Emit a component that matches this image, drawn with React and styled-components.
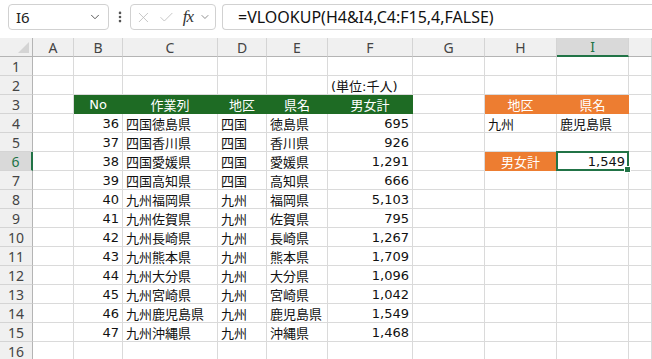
import React from 'react';
import styled, { createGlobalStyle, css } from 'styled-components';
import { ChevronDown, X, Check, EllipsisVertical } from 'lucide-react';

const GREEN = '#1e6b24';
const ORANGE = '#ed7d31';
const SEL = '#217346';
const GRID = '#dadada';

const Global = createGlobalStyle`
  html, body { margin: 0; padding: 0; background: #fff; overflow: hidden; }
  body { font-family: "DejaVu Sans", "Noto Sans CJK JP", sans-serif; }
`;

const Page = styled.div`
  width: 652px;
  height: 359px;
  overflow: hidden;
`;

// ===== formula bar
const FormulaBar = styled.div`
  height: 38px;
  display: flex;
  align-items: flex-start;
  padding: 4px 0 0 8px;
  box-sizing: border-box;
  gap: 0;
`;

const Box = styled.div`
  height: 26px;
  box-sizing: border-box;
  border: 1px solid #d1d1d1;
  border-radius: 4px;
  background: #fff;
  display: flex;
  align-items: center;
  font-family: "Noto Sans", sans-serif;
  color: #222;
`;

const NameBox = styled(Box)`
  width: 101px;
  padding: 0 6px 0 7px;
  justify-content: space-between;
  font-size: 15px;
`;

const Dots = styled.div`
  width: 21px;
  display: flex;
  justify-content: center;
  padding-top: 6px;
  color: #555;
`;

const FnBox = styled(Box)`
  width: 86px;
  padding: 0 4px 0 4px;
  gap: 6px;
  color: #bdbdbd;
`;

const Fx = styled.span`
  font-family: "Liberation Serif", serif;
  font-style: italic;
  font-size: 17px;
  color: #333;
  margin-left: 2px;
  letter-spacing: -1px;
`;

const FormulaBox = styled(Box)`
  flex: 1;
  margin-left: 6px;
  border-right: none;
  border-radius: 4px 0 0 4px;
  padding-left: 15px;
  font-size: 16px;
  color: #111;
`;

// ===== sheet grid
const Sheet = styled.div`
  display: grid;
  grid-template-columns: 33px 41px 49px 95px 49px 61px 85px 72px 72px 72px 1fr;
  grid-template-rows: repeat(17, 19px);
`;

const Corner = styled.div`
  background: #f0f0f0;
  border-right: 1px solid #b4b4b4;
  border-bottom: 1px solid #b4b4b4;
  display: flex;
  align-items: flex-end;
  justify-content: flex-end;
  padding: 0 3px 3px 0;
  box-sizing: border-box;
`;

const Tri = styled.div`
  width: 0;
  height: 0;
  border-left: 11px solid transparent;
  border-bottom: 11px solid #d4d4d4;
`;

const ColHead = styled.div`
  background: ${p => (p.$active ? '#d9d9d9' : '#f0f0f0')};
  border-right: 1px solid #d4d4d4;
  border-bottom: ${p => (p.$active ? `2px solid ${SEL}` : '1px solid #b4b4b4')};
  box-sizing: border-box;
  display: flex;
  align-items: center;
  justify-content: center;
  font-family: "Noto Sans", sans-serif;
  font-size: 14px;
  color: ${p => (p.$active ? SEL : '#444')};
`;

const RowHead = styled.div`
  background: ${p => (p.$active ? '#d9d9d9' : '#f0f0f0')};
  border-right: ${p => (p.$active ? `2px solid ${SEL}` : '1px solid #b4b4b4')};
  border-bottom: 1px solid #d4d4d4;
  box-sizing: border-box;
  display: flex;
  align-items: center;
  justify-content: center;
  font-family: "Noto Sans", sans-serif;
  font-size: 14px;
  color: ${p => (p.$active ? SEL : '#444')};
`;

const Cell = styled.div`
  position: relative;
  box-sizing: border-box;
  border-right: 1px solid ${p => p.$fill || GRID};
  border-bottom: 1px solid ${p => p.$fill || GRID};
  background: ${p => p.$fill || '#fff'};
  color: ${p => p.$fg || '#111'};
  display: flex;
  align-items: center;
  justify-content: ${p =>
    p.$align === 'right' ? 'flex-end' : p.$align === 'center' ? 'center' : 'flex-start'};
  padding: 1px 3px 0 3px;
  font-size: 13px;
  white-space: nowrap;
  overflow: visible;
  z-index: ${p => (p.$selected ? 2 : 0)};
  ${p =>
    p.$selected &&
    css`
      &::after {
        content: '';
        position: absolute;
        left: -1px;
        top: -1px;
        right: -1px;
        bottom: -1px;
        border: 2px solid ${SEL};
      }
      &::before {
        content: '';
        position: absolute;
        right: -3px;
        bottom: -3px;
        width: 5px;
        height: 5px;
        background: ${SEL};
        border: 1px solid #fff;
        z-index: 3;
      }
    `}
`;

const cols = ['A', 'B', 'C', 'D', 'E', 'F', 'G', 'H', 'I', ''];

const data = [
  [36, '四国徳島県', '四国', '徳島県', '695'],
  [37, '四国香川県', '四国', '香川県', '926'],
  [38, '四国愛媛県', '四国', '愛媛県', '1,291'],
  [39, '四国高知県', '四国', '高知県', '666'],
  [40, '九州福岡県', '九州', '福岡県', '5,103'],
  [41, '九州佐賀県', '九州', '佐賀県', '795'],
  [42, '九州長崎県', '九州', '長崎県', '1,267'],
  [43, '九州熊本県', '九州', '熊本県', '1,709'],
  [44, '九州大分県', '九州', '大分県', '1,096'],
  [45, '九州宮崎県', '九州', '宮崎県', '1,042'],
  [46, '九州鹿児島県', '九州', '鹿児島県', '1,549'],
  [47, '九州沖縄県', '九州', '沖縄県', '1,468'],
];

// 行ごとのセル定義 (A..J)
function rowCells(r) {
  const empty = () => ({});
  const c = Array.from({ length: 10 }, empty);
  if (r === 2) c[5] = { text: '(単位:千人)' };
  if (r === 3) {
    ['No', '作業列', '地区', '県名', '男女計'].forEach((t, i) => {
      c[i + 1] = { text: t, align: 'center', fill: GREEN, fg: '#fff' };
    });
    c[7] = { text: '地区', align: 'center', fill: ORANGE, fg: '#fff' };
    c[8] = { text: '県名', align: 'center', fill: ORANGE, fg: '#fff' };
  }
  if (r >= 4 && r <= 15) {
    const d = data[r - 4];
    c[1] = { text: d[0], align: 'right' };
    c[2] = { text: d[1] };
    c[3] = { text: d[2] };
    c[4] = { text: d[3] };
    c[5] = { text: d[4], align: 'right' };
  }
  if (r === 4) {
    c[7] = { text: '九州' };
    c[8] = { text: '鹿児島県' };
  }
  if (r === 6) {
    c[7] = { text: '男女計', align: 'center', fill: ORANGE, fg: '#fff' };
    c[8] = { text: '1,549', align: 'right', selected: true };
  }
  return c;
}

export default function App() {
  const rows = Array.from({ length: 16 }, (_, i) => i + 1);
  return (
    <Page>
      <Global />
      <FormulaBar>
        <NameBox>
          <span>I6</span>
          <ChevronDown size={14} strokeWidth={1.5} color="#444" />
        </NameBox>
        <Dots>
          <EllipsisVertical size={14} strokeWidth={2.5} />
        </Dots>
        <FnBox>
          <X size={17} strokeWidth={1.2} />
          <Check size={17} strokeWidth={1.2} />
          <Fx>fx</Fx>
          <ChevronDown size={12} strokeWidth={1.5} color="#666" />
        </FnBox>
        <FormulaBox>=VLOOKUP(H4&amp;I4,C4:F15,4,FALSE)</FormulaBox>
      </FormulaBar>
      <Sheet>
        <Corner>
          <Tri />
        </Corner>
        {cols.map((c, i) => (
          <ColHead key={i} $active={c === 'I'}>
            {c}
          </ColHead>
        ))}
        {rows.map(r => (
          <React.Fragment key={r}>
            <RowHead $active={r === 6}>{r}</RowHead>
            {rowCells(r).map((cell, i) => (
              <Cell
                key={i}
                $align={cell.align}
                $fill={cell.fill}
                $fg={cell.fg}
                $selected={cell.selected}
              >
                {cell.text}
              </Cell>
            ))}
          </React.Fragment>
        ))}
      </Sheet>
    </Page>
  );
}
